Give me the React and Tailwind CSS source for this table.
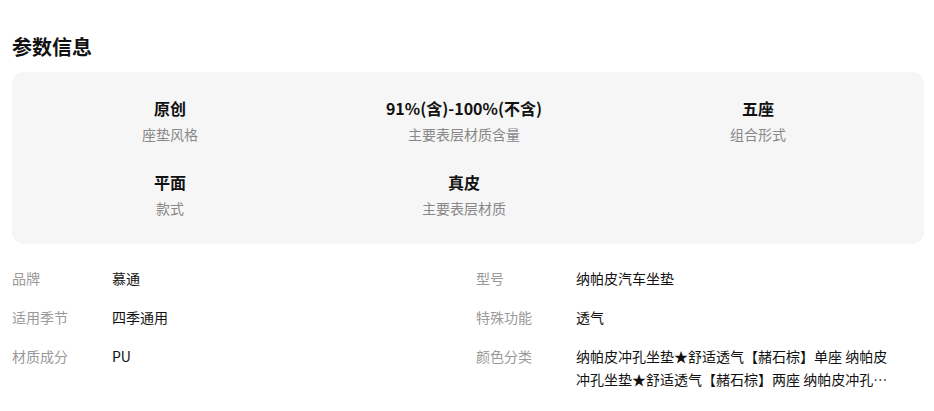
const cjk = { fontFamily: '"Noto Sans CJK SC", "Noto Sans", sans-serif' };

const highlights = [
  { value: '原创', label: '座垫风格' },
  { value: '91%(含)-100%(不含)', label: '主要表层材质含量' },
  { value: '五座', label: '组合形式' },
  { value: '平面', label: '款式' },
  { value: '真皮', label: '主要表层材质' },
];

const specs = [
  { label: '品牌', value: '慕通' },
  { label: '型号', value: '纳帕皮汽车坐垫' },
  { label: '适用季节', value: '四季通用' },
  { label: '特殊功能', value: '透气' },
  { label: '材质成分', value: 'PU' },
  {
    label: '颜色分类',
    value:
      '纳帕皮冲孔坐垫★舒适透气【赭石棕】单座 纳帕皮冲孔坐垫★舒适透气【赭石棕】两座 纳帕皮冲孔坐垫★舒适透气【赭石棕】五座',
  },
];

export default function App() {
  return (
    <div className="bg-white w-[934px] h-[411px] overflow-hidden pl-3 pr-[10px]" style={cjk}>
      <h2 className="pt-[33px] text-[20px] leading-[28px] font-bold text-[#111]">参数信息</h2>

      <div className="mt-[11px] rounded-xl bg-[#f6f6f6] pl-[11px] pr-[19px] pt-6 pb-[26px] grid grid-cols-3 gap-y-[26px]">
        {highlights.map(h => (
          <div key={h.label} className="flex flex-col items-center">
            <div className="text-[16px] leading-6 font-bold text-[#111]">{h.value}</div>
            <div className="mt-[4px] text-[14px] leading-5 text-[#888]">{h.label}</div>
          </div>
        ))}
      </div>

      <div className="mt-[23px] grid grid-cols-[464px_1fr] gap-y-4 text-[14px] leading-[22px]">
        {specs.map(s => (
          <div key={s.label} className="flex">
            <div className="w-[100px] shrink-0 text-[#999]">{s.label}</div>
            <div className="w-[318px] text-[#111] line-clamp-2 leading-[23px]">{s.value}</div>
          </div>
        ))}
      </div>
    </div>
  );
}
